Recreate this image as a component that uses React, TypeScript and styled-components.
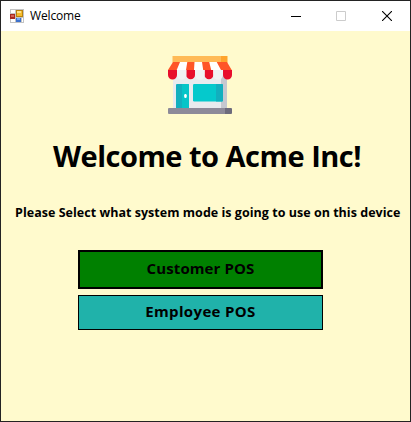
import React from 'react';
import styled, { createGlobalStyle } from 'styled-components';

const GlobalStyle = createGlobalStyle`
  * { box-sizing: border-box; }
  body { margin: 0; font-family: 'Open Sans', 'Noto Sans', sans-serif; color: #000; }
`;

const Window = styled.div`
  width: 411px;
  height: 422px;
  display: flex;
  flex-direction: column;
  border: 1px solid #232323;
  background: #fffacd;
  overflow: hidden;
`;

const TitleBar = styled.header`
  flex: none;
  height: 30px;
  display: flex;
  align-items: center;
  padding-left: 9px;
  background: #fff;
`;

const Caption = styled.span`
  flex: 1;
  margin-left: 6px;
  font-size: 12px;
  line-height: 16px;
  letter-spacing: -0.15px;
`;

const WindowButton = styled.button<{ $width?: number }>`
  width: ${(p) => p.$width ?? 46}px;
  height: 30px;
  padding: 0;
  border: 0;
  background: none;
  display: flex;
  align-items: center;
  justify-content: center;
`;

const Content = styled.main`
  flex: 1;
  display: flex;
  flex-direction: column;
  align-items: flex-start;
`;

const Logo = styled.div`
  height: 58px;
  margin: 25px 0 0 167px;
`;

const Title = styled.h1`
  margin: 22px 0 0 52px;
  font-size: 29px;
  line-height: 40px;
  font-weight: 700;
  letter-spacing: -0.5px;
  white-space: nowrap;
`;

const Prompt = styled.p`
  margin: 28px 0 0 14px;
  font-size: 12.5px;
  line-height: 18px;
  font-weight: 700;
  letter-spacing: 0.03px;
  white-space: nowrap;
`;

const Choices = styled.div`
  display: flex;
  flex-direction: column;
  gap: 6px;
  margin: 28px 0 0 77px;
`;

const Choice = styled.button<{ $fill: string; $height: number; $border: number; $tracking: number }>`
  width: 245px;
  height: ${(p) => p.$height}px;
  padding: 0 0 3px;
  border: ${(p) => p.$border}px solid #000;
  border-radius: 0;
  background: ${(p) => p.$fill};
  color: #000;
  font: 700 15px/20px 'Open Sans', 'Noto Sans', sans-serif;
  letter-spacing: ${(p) => p.$tracking}px;
`;

const FormIcon = () => (
  <svg width="14" height="14" viewBox="0 0 14 14" shapeRendering="crispEdges">
    <path fill="#c3c3c3" d="M0 0h14v14H0z" />
    <path fill="#fff" d="M1 1h4v3H1zM1 10h4v3H1zM12 9h1v4h-1z" />
    <path fill="#a92a20" d="M0 5h5v5H0z" />
    <path fill="#d66355" d="M1 6h3v2H1z" />
    <path fill="#b9820d" d="M6 1h7v7H6z" />
    <path fill="#f5bd2d" d="M7 2h5v5H7z" />
    <path fill="#ffe28a" d="M7 2h4v2H7z" />
    <path fill="#3c71cd" d="M6 9h5v4H6z" />
    <path fill="#79a9f1" d="M7 9h3v2H7z" />
  </svg>
);

const StoreIcon = () => (
  <svg width="64" height="58" viewBox="0 0 64 58">
    <path fill="#e9ebee" d="M5 18h48v34H5z" />
    <path fill="#c5c8d0" d="M53 18h6v34h-6z" />
    <path fill="#ffba57" d="M4.5 0H53v7H4.5z" />
    <path fill="#ffa42c" d="M53 0h6.5v7H53z" />
    <path fill="#fff" d="M5 6h54l5 12H0z" />
    <path fill="#ff5527" d="M5 6h7L8.7 14H0zM19.3 6h7.2L26 14h-8zM34 6h7.2l2 8h-8zM48.7 6H59l4.7 8H53z" />
    <path fill="#e80d2c" d="M0 14h9v5a4.5 4.5 0 0 1-9 0zM18.3 14h8.7v5a4.35 4.35 0 0 1-8.7 0zM36.6 14h8.7v5a4.35 4.35 0 0 1-8.7 0zM55 14h9v5a4.5 4.5 0 0 1-9 0z" />
    <path fill="#f0f1f4" d="M9 14h9.3v5a4.65 4.65 0 0 1-9.3 0zM27 14h9.6v5a4.8 4.8 0 0 1-9.6 0zM45.3 14H55v5a4.85 4.85 0 0 1-9.7 0z" />
    <rect x="8" y="28" width="13" height="25" rx="1" fill="#12afbe" />
    <path fill="#05c5c8" d="M14 28h6q1 0 1 1v24h-7z" />
    <rect x="16.2" y="38" width="2.5" height="4" rx="1.2" fill="#fff" />
    <rect x="25" y="28" width="30" height="17.5" rx="1.2" fill="#05c9cc" />
    <path fill="#12afbe" d="M48 28h5.8q1.2 0 1.2 1.2v15q0 1.3-1.2 1.3H48z" />
    <path fill="#8d8a99" d="M1 52h56v6H1q-1 0-1-1v-4q0-1 1-1z" />
    <path fill="#6d6b7c" d="M57 52h6q1 0 1 1v4q0 1-1 1h-6z" />
  </svg>
);

export default function App() {
  return (
    <Window>
      <GlobalStyle />
      <TitleBar>
        <FormIcon />
        <Caption>Welcome</Caption>
        <WindowButton $width={44} aria-label="Minimize">
          <svg width="10" height="10" shapeRendering="crispEdges"><path d="M0 5h10v1H0z" /></svg>
        </WindowButton>
        <WindowButton aria-label="Maximize" disabled>
          <svg width="10" height="10"><path fill="none" stroke="#ccc" d="M.5.5h9v9h-9z" /></svg>
        </WindowButton>
        <WindowButton aria-label="Close">
          <svg width="10" height="10"><path stroke="#000" strokeWidth="1.1" d="M0 0l10 10M10 0L0 10" /></svg>
        </WindowButton>
      </TitleBar>
      <Content>
        <Logo><StoreIcon /></Logo>
        <Title>Welcome to Acme Inc!</Title>
        <Prompt>Please Select what system mode is going to use on this device</Prompt>
        <Choices>
          <Choice $fill="#008000" $height={39} $border={2} $tracking={0.1}>Customer POS</Choice>
          <Choice $fill="#20b2aa" $height={35} $border={1} $tracking={0.35}>Employee POS</Choice>
        </Choices>
      </Content>
    </Window>
  );
}
